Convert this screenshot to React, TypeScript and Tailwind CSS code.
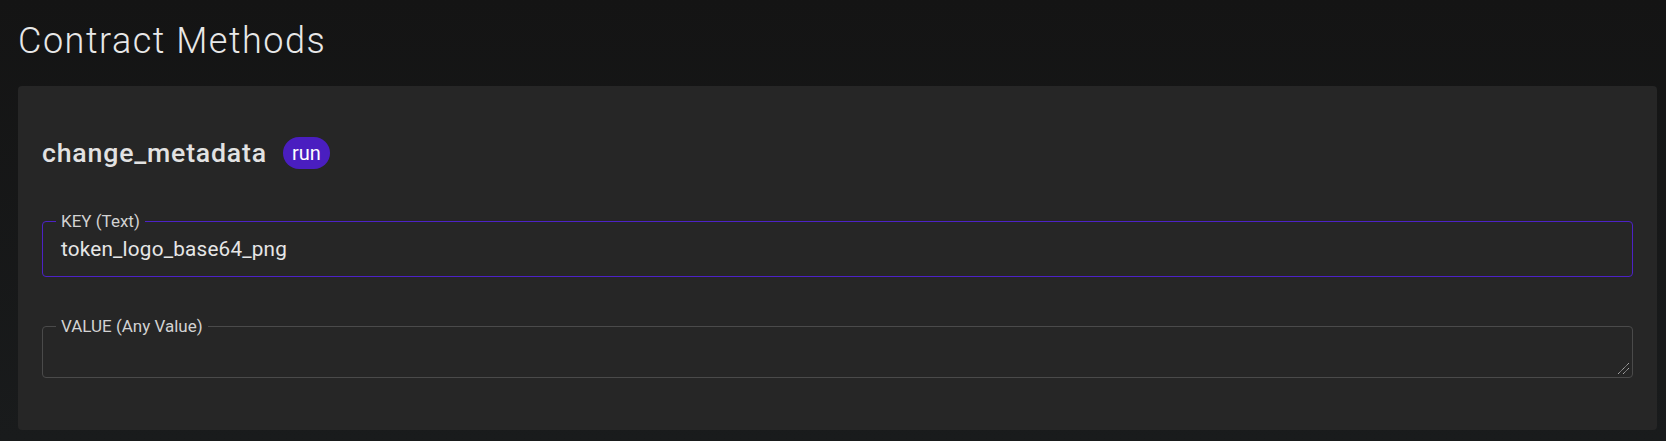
import React from "react";

export default function App() {
  return (
    <div
      className="w-[1666px] h-[441px] bg-linear-to-b from-[#141414] to-[#191b1c] overflow-hidden"
      style={{ fontFamily: 'Roboto, "Noto Sans", sans-serif' }}
    >
      <div className="pt-[20px] pl-[18px]">
        <h1 className="text-[36px] leading-[42px] font-light tracking-[0.042em] text-[#e8e8e8]">Contract Methods</h1>
      </div>
      <div className="mt-[24px] ml-[18px] mr-[9px] h-[344px] rounded-[4px] bg-[#262626] px-[24px] pt-[51px]">
        <div className="flex items-center h-[32px]">
          <span className="text-[26.7px] font-medium tracking-[0.03em] text-[#e2e2e2] leading-none">
            change_metadata
          </span>
          <span className="ml-[16px] h-[32px] px-[9px] rounded-full bg-[#4a1ec0] text-white text-[20px] leading-[32px] flex items-center">
            run
          </span>
        </div>

        <div className="relative mt-[52px] h-[56px] rounded-[4px] border border-[#4c22c6] flex items-center pl-[18px]">
          <span className="absolute -top-[11px] left-[13px] px-[5px] bg-[#262626] text-[17px] leading-[20px] text-[#d2d2d2]">
            KEY (Text)
          </span>
          <span className="text-[20.7px] tracking-[0.01em] text-[#e6e6e6] leading-none">
            token_logo_base64_png
          </span>
        </div>

        <div className="relative mt-[49px] h-[52px] rounded-[4px] border border-[#4a4a4a]">
          <span className="absolute -top-[11px] left-[13px] px-[5px] bg-[#262626] text-[17px] leading-[20px] text-[#d2d2d2]">
            VALUE (Any Value)
          </span>
          <svg
            className="absolute right-[2px] bottom-[2px]"
            width="13"
            height="13"
            viewBox="0 0 13 13"
          >
            <line x1="1" y1="12" x2="12" y2="1" stroke="#bdbdbd" strokeWidth="1" strokeDasharray="1.2 0.6" />
            <line x1="6" y1="12" x2="12" y2="6" stroke="#bdbdbd" strokeWidth="1" strokeDasharray="1.2 0.6" />
          </svg>
        </div>
      </div>
    </div>
  );
}
